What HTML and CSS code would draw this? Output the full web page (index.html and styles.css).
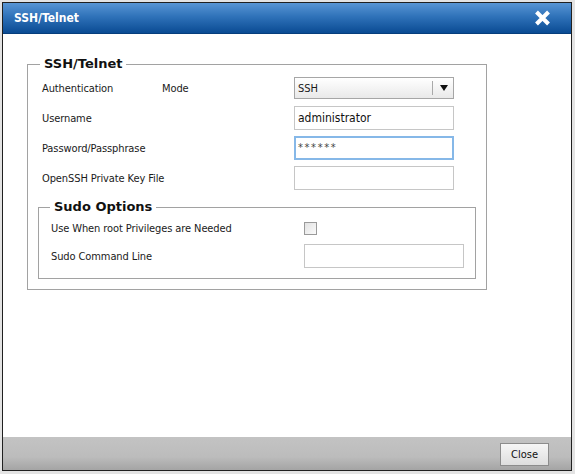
FILE: index.html
```html
<!DOCTYPE html>
<html>
<head>
<meta charset="utf-8">
<link rel="stylesheet" href="styles.css">
</head>
<body>
<div class="dialog">
  <div class="titlebar">
    <span class="title">SSH/Telnet</span>
    <svg class="close-x" width="17" height="16" viewBox="0 0 17 16"><path d="M2.5 2 L14.5 14 M14.5 2 L2.5 14" stroke="#fff" stroke-width="4" stroke-linecap="butt"/></svg>
  </div>
  <div class="content">
    <fieldset class="group outer">
      <legend>SSH/Telnet</legend>
      <div class="rows">
        <div class="row">
          <div class="label"><span class="auth">Authentication</span><span>Mode</span></div>
          <div class="select"><span class="sel-val">SSH</span><span class="sel-arrow"></span></div>
        </div>
        <div class="row">
          <div class="label">Username</div>
          <div class="input">administrator</div>
        </div>
        <div class="row">
          <div class="label">Password/Passphrase</div>
          <div class="input focused">******</div>
        </div>
        <div class="row">
          <div class="label">OpenSSH Private Key File</div>
          <div class="input"></div>
        </div>
      </div>
      <fieldset class="group inner">
        <legend>Sudo Options</legend>
        <div class="rows sudo">
          <div class="row">
            <div class="label">Use When root Privileges are Needed</div>
            <div class="checkcell"><span class="checkbox"></span></div>
          </div>
          <div class="row">
            <div class="label">Sudo Command Line</div>
            <div class="input"></div>
          </div>
        </div>
      </fieldset>
    </fieldset>
  </div>
  <div class="footer">
    <button class="btn">Close</button>
  </div>
</div>
</body>
</html>
```
FILE: styles.css
```css
html, body {
  margin: 0;
  padding: 0;
}
body {
  background: #e3e3e3;
  font-family: "DejaVu Sans", "Liberation Sans", sans-serif;
  font-stretch: condensed;
  font-size: 11px;
  color: #1a1a1a;
}
.dialog {
  margin: 2px;
  width: 568px;
  height: 467px;
  border: 1px solid #202020;
  background: #fff;
  display: flex;
  flex-direction: column;
}
.titlebar {
  flex: none;
  height: 31px;
  display: flex;
  align-items: center;
  justify-content: space-between;
  padding: 0 20px 0 11px;
  background: linear-gradient(#5895d4, #2f72b9 45%, #0a4b93);
  border-bottom: 1px solid #063e7c;
  box-sizing: border-box;
}
.title {
  color: #fff;
  font-family: "DejaVu Sans", "Liberation Sans", sans-serif;
  font-stretch: condensed;
  font-weight: bold;
  font-size: 12px;
}
.close-x {
  display: block;
}
.content {
  flex: 1;
  padding: 22px 0 0 24px;
}
.group {
  margin: 0;
  padding: 0;
  border: 1px solid #a2a2a2;
  min-width: 0;
}
.group legend {
  font-family: "DejaVu Sans", sans-serif;
  font-stretch: normal;
  font-weight: bold;
  font-size: 13px;
  line-height: 16px;
  color: #111;
  padding: 0 4px;
  margin-left: 12px;
}
.outer {
  width: 458px;
  padding-bottom: 10px;
}
.inner {
  margin: 9px 10px 0 10px;
  padding-bottom: 10px;
}
.inner legend {
  margin-left: 11px;
}
.rows {
  display: flex;
  flex-direction: column;
  gap: 6px;
  padding: 4px 0 0 14px;
}
.rows.sudo {
  gap: 4px;
  padding: 1px 0 0 12px;
}
.row {
  display: grid;
  grid-template-columns: 252px 160px;
  height: 24px;
  align-items: center;
}
.sudo .row {
  grid-template-columns: 253px 160px;
}
.label {
  display: flex;
  letter-spacing: -0.1px;
}
.auth {
  width: 120px;
}
.input {
  height: 24px;
  box-sizing: border-box;
  border: 1px solid #c6c6c6;
  padding: 0 3px;
  line-height: 22px;
  font-size: 12px;
  color: #111;
  background: #fff;
}
.input.focused {
  border: 2px solid #86b8e8;
  line-height: 20px;
  padding: 0 2px;
  font-size: 11px;
  letter-spacing: 1.6px;
  color: #444;
}
.select {
  height: 22px;
  box-sizing: border-box;
  border: 1px solid #a6a6a6;
  background: linear-gradient(#ffffff, #e9e9e9);
  display: flex;
  align-items: center;
}
.sel-val {
  flex: 1;
  padding-left: 3px;
}
.sel-arrow {
  width: 20px;
  height: 14px;
  border-left: 1px solid #a9a9a9;
  position: relative;
}
.sel-arrow::after {
  content: "";
  position: absolute;
  left: 7px;
  top: 4px;
  border-left: 4px solid transparent;
  border-right: 4px solid transparent;
  border-top: 6px solid #111;
}
.checkcell {
  display: flex;
  align-items: center;
}
.checkbox {
  width: 13px;
  height: 13px;
  box-sizing: border-box;
  border: 1px solid #9a9a9a;
  background: linear-gradient(135deg, #e2e2e2, #fafafa);
}
.footer {
  flex: none;
  height: 33px;
  display: flex;
  align-items: center;
  justify-content: flex-end;
  padding-right: 22px;
  background: linear-gradient(#c3c3c3, #bcbcbc 60%, #a4a4a4);
}
.btn {
  width: 49px;
  height: 23px;
  margin-top: 1px;
  border: 1px solid #8c8c8c;
  background: linear-gradient(#f6f6f6, #dedede);
  font-family: "DejaVu Sans", "Liberation Sans", sans-serif;
  font-stretch: condensed;
  font-size: 11px;
  color: #111;
  padding: 0;
}
```
